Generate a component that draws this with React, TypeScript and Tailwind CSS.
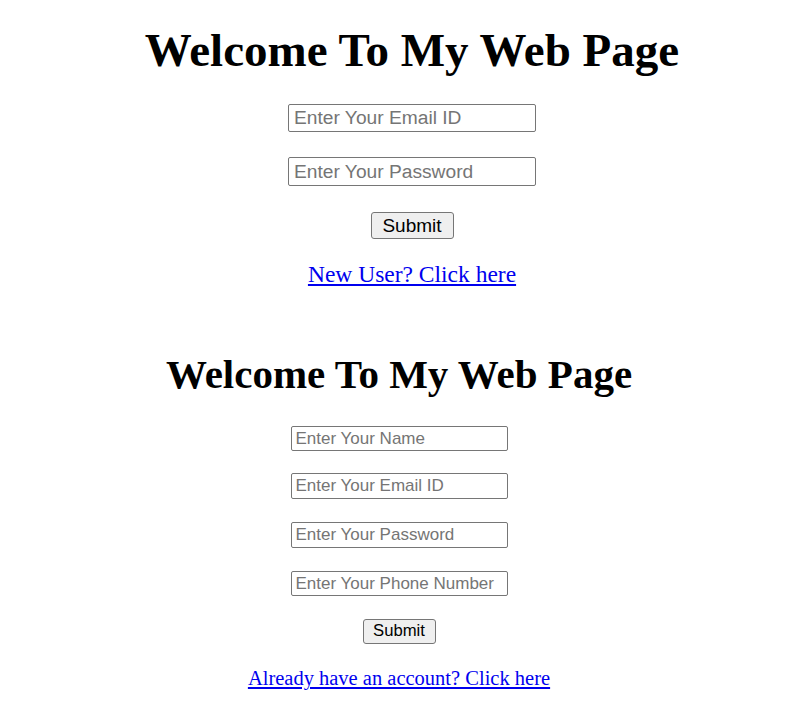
import { useState } from "react";

const serif = "font-['Liberation_Serif','Times_New_Roman',serif]";
const sans = "font-['Liberation_Sans',Arial,sans-serif]";

export default function App() {
  const [login, setLogin] = useState({ email: "", password: "" });
  const [signup, setSignup] = useState({ name: "", email: "", password: "", phone: "" });

  return (
    <main className="w-[812px] h-[727px] bg-white text-black overflow-hidden">
      {/* login */}
      <section className="flex flex-col items-center pl-[12px]">
        <h1 className={`${serif} mt-[27px] text-[47px] leading-[47px] font-bold`}>Welcome To My Web Page</h1>
        <input
          value={login.email}
          onChange={(e) => setLogin({ ...login, email: e.target.value })}
          placeholder="Enter Your Email ID"
          className={`${sans} mt-[30px] w-[248px] h-[28px] px-[5px] border border-[#767676] rounded-[2px] text-[19.2px] placeholder:text-[#757575] outline-none`}
        />
        <input
          type="password"
          value={login.password}
          onChange={(e) => setLogin({ ...login, password: e.target.value })}
          placeholder="Enter Your Password"
          className={`${sans} mt-[25px] w-[248px] h-[29px] px-[5px] border border-[#767676] rounded-[2px] text-[19.2px] placeholder:text-[#757575] outline-none`}
        />
        <button className={`${sans} mt-[26px] w-[83px] h-[27px] bg-[#efefef] border border-[#767676] rounded-[3px] text-[19px] leading-none`}>
          Submit
        </button>
        <a href="#" className={`${serif} mt-[23px] text-[23.5px] leading-[24px] text-[#0000ee] underline`}>
          New User? Click here
        </a>
      </section>

      {/* signup */}
      <section className="flex flex-col items-center pr-[14px]">
        <h1 className={`${serif} mt-[68px] text-[41px] leading-[41px] font-bold`}>Welcome To My Web Page</h1>
        <input
          value={signup.name}
          onChange={(e) => setSignup({ ...signup, name: e.target.value })}
          placeholder="Enter Your Name"
          className={`${sans} mt-[31px] w-[217px] h-[25px] px-[4px] border border-[#767676] rounded-[2px] text-[17px] placeholder:text-[#757575] outline-none`}
        />
        <input
          value={signup.email}
          onChange={(e) => setSignup({ ...signup, email: e.target.value })}
          placeholder="Enter Your Email ID"
          className={`${sans} mt-[22px] w-[217px] h-[26px] px-[4px] border border-[#767676] rounded-[2px] text-[17px] placeholder:text-[#757575] outline-none`}
        />
        <input
          type="password"
          value={signup.password}
          onChange={(e) => setSignup({ ...signup, password: e.target.value })}
          placeholder="Enter Your Password"
          className={`${sans} mt-[23px] w-[217px] h-[26px] px-[4px] border border-[#767676] rounded-[2px] text-[17px] placeholder:text-[#757575] outline-none`}
        />
        <input
          value={signup.phone}
          onChange={(e) => setSignup({ ...signup, phone: e.target.value })}
          placeholder="Enter Your Phone Number"
          className={`${sans} mt-[23px] w-[217px] h-[25px] px-[4px] border border-[#767676] rounded-[2px] text-[17px] placeholder:text-[#757575] outline-none`}
        />
        <button className={`${sans} mt-[23px] w-[73px] h-[25px] bg-[#efefef] border border-[#767676] rounded-[3px] text-[16.7px] leading-none`}>
          Submit
        </button>
        <a href="#" className={`${serif} mt-[24px] text-[20.5px] leading-[21px] text-[#0000ee] underline`}>
          Already have an account? Click here
        </a>
      </section>
    </main>
  );
}
